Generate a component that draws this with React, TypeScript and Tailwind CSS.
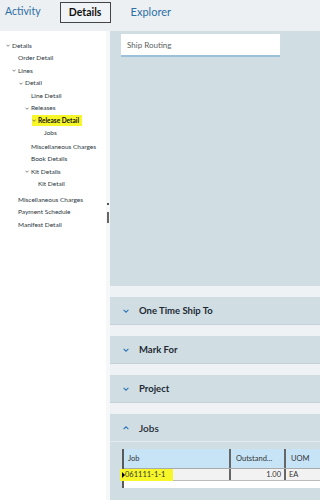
import React from "react";

type TreeNode = {
  label: string;
  pad: string;
  open?: boolean;
  bold?: boolean;
  hl?: boolean;
  mt?: string;
};

const tree: TreeNode[] = [
  { label: "Details", pad: "pl-[12px]", open: true },
  { label: "Order Detail", pad: "pl-[18px]" },
  { label: "Lines", pad: "pl-[18px]", open: true },
  { label: "Detail", pad: "pl-[25px]", open: true },
  { label: "Line Detail", pad: "pl-[31px]" },
  { label: "Releases", pad: "pl-[31px]", open: true },
  { label: "Release Detail", pad: "pl-[38px]", open: true, bold: true, hl: true },
  { label: "Jobs", pad: "pl-[44px]" },
  { label: "Miscellaneous Charges", pad: "pl-[31px]", mt: "mt-[1px]" },
  { label: "Book Details", pad: "pl-[31px]" },
  { label: "Kit Details", pad: "pl-[31px]", open: true },
  { label: "Kit Detail", pad: "pl-[38px]" },
  { label: "Miscellaneous Charges", pad: "pl-[18px]", mt: "mt-[3px]" },
  { label: "Payment Schedule", pad: "pl-[18px]" },
  { label: "Manifest Detail", pad: "pl-[18px]" },
];

const Chevron = ({ up = false, className = "" }: { up?: boolean; className?: string }) => (
  <svg viewBox="0 0 10 6" className={className} fill="none" stroke="currentColor" strokeWidth={1.8}>
    <polyline points={up ? "1,5 5,1 9,5" : "1,1 5,5 9,1"} />
  </svg>
);

const Section = ({ title }: { title: string }) => (
  <div className="h-[28px] mt-[11px] bg-[#d0dde3] flex items-center pl-[13px] pt-[1px] border-b border-[#c3d2d9]">
    <Chevron className="w-[6px] h-[4px] text-[#2f78b7]" />
    <span className="ml-[10px] text-[9.5px] font-bold text-[#1e2a33]">{title}</span>
  </div>
);

export default function App() {
  return (
    <div className="w-[320px] h-[500px] overflow-hidden flex flex-col bg-[#eef2f5] font-['Lato',_'Liberation_Sans',_sans-serif]">
      {/* tabs */}
      <div className="h-[31px] shrink-0 bg-[#ecf0f3] flex items-start pt-[2px]">
        <div className="ml-[5px] h-[20px] flex items-center text-[10.5px] text-[#2d6fa5]">Activity</div>
        <div className="ml-[19px] w-[51px] h-[21px] flex items-center justify-center border border-[#444] bg-[#f1f4f6] text-[10.5px] font-bold text-[#111]">
          Details
        </div>
        <div className="ml-[20px] h-[20px] flex items-center text-[11px] text-[#2d6fa5]">Explorer</div>
      </div>

      <div className="flex flex-1 min-h-0">
        {/* tree */}
        <div className="w-[106px] bg-white pt-[8.5px] text-[6.5px] text-[#2b3640]">
          {tree.map((n, i) => (
            <div key={i} className={`${n.pad} ${n.mt ?? ""} h-[12.5px] flex items-center`}>
              <span
                className={`inline-flex items-center h-[11px] ${n.open ? "-ml-[6px]" : ""} ${
                  n.hl ? "bg-[#f6f629] pr-[3px]" : ""
                } ${n.bold ? "font-bold text-[#111]" : ""}`}
              >
                {n.open && <Chevron className="w-[4px] h-[3px] mr-[2px] text-[#555]" />}
                {n.label}
              </span>
            </div>
          ))}
        </div>

        {/* splitter */}
        <div className="w-[4px] bg-[#f6f7f8] flex flex-col items-center pt-[172px]">
          <div className="w-[2px] h-[2px] bg-[#555]" />
          <div className="w-[2px] h-[11px] mt-[7px] bg-[#666]" />
        </div>

        {/* content */}
        <div className="flex-1 flex flex-col">
          <div className="h-[255px] shrink-0 bg-[#d0dde3] pl-[11px] pt-[3px]">
            <div className="w-[159px] h-[23px] bg-white border-b-2 border-[#9cc0d7] flex items-center pl-[6px] text-[8px] text-[#5a5f63]">
              Ship Routing
            </div>
          </div>

          <Section title="One Time Ship To" />
          <Section title="Mark For" />
          <Section title="Project" />

          <div className="mt-[11px] flex-1 bg-[#d0dde3]">
            <div className="h-[28px] flex items-center pl-[13px] pt-[1px] border-b border-[#e3eaee]">
              <Chevron up className="w-[6px] h-[4px] text-[#2f78b7]" />
              <span className="ml-[10px] text-[10px] font-semibold text-[#1e2a33]">Jobs</span>
            </div>
            <div className="pl-[12px] pt-[7px]">
              <div className="bg-white pb-[7px] border-l-2 border-[#5a5a5a] text-[7.5px] text-[#333]">
                <div className="flex h-[20px] bg-[#c6e4f6] border-b border-[#aaa]">
                  <div className="w-[107px] pl-[4px] flex items-center border-r-2 border-[#666]">Job</div>
                  <div className="w-[55px] pl-[5px] flex items-center border-r-2 border-[#666]">Outstand...</div>
                  <div className="flex-1 pl-[5px] flex items-center">UOM</div>
                </div>
                <div className="flex h-[12px] bg-[#f2f2f2] border-b border-[#bbb]">
                  <div className="w-[107px] flex items-center border-r-2 border-[#666]">
                    <span className="relative h-[12px] flex items-center bg-[#f6f629] pl-[2px] pr-[8px] -ml-[4px]">
                      <span className="w-0 h-0 border-y-[3px] border-y-transparent border-l-[3px] border-l-black" />
                      061111-1-1
                    </span>
                  </div>
                  <div className="w-[55px] pr-[3px] flex items-center justify-end border-r-2 border-[#666]">1.00</div>
                  <div className="flex-1 pl-[3px] flex items-center">EA</div>
                </div>
              </div>
            </div>
          </div>
        </div>
      </div>
    </div>
  );
}
